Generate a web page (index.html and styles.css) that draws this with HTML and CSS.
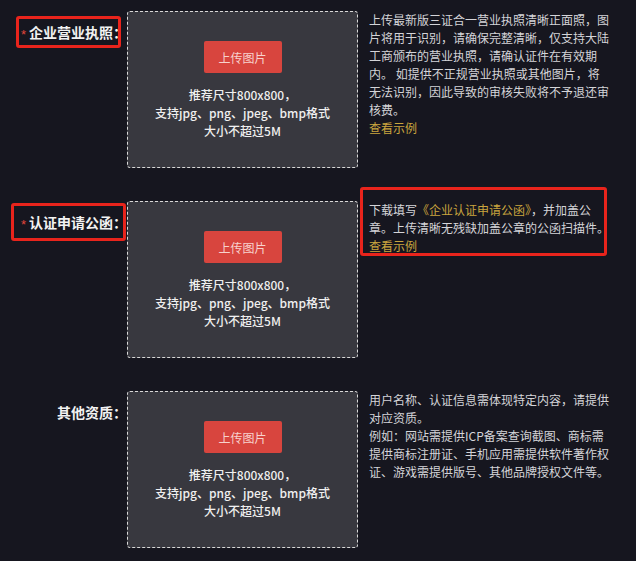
FILE: index.html
```html
<!DOCTYPE html>
<html lang="zh-CN">
<head>
<meta charset="utf-8">
<title>认证资料上传</title>
<link rel="stylesheet" href="styles.css">
</head>
<body>
<div class="form">
  <div class="row">
    <div class="label-col">
      <span class="label mark-1"><span class="req">*</span>企业营业执照：</span>
    </div>
    <div class="upload">
      <button class="btn" type="button">上传图片</button>
      <p class="hint">推荐尺寸800x800，<br>支持jpg、png、jpeg、bmp格式<br>大小不超过5M</p>
    </div>
    <div class="desc">
      上传最新版三证合一营业执照清晰正面照，图<br>片将用于识别，请确保完整清晰，仅支持大陆<br>工商颁布的营业执照，请确认证件在有效期<br>内。 如提供不正规营业执照或其他图片，将<br>无法识别，因此导致的审核失败将不予退还审<br>核费。<br><a class="link" href="#">查看示例</a>
    </div>
  </div>

  <div class="row">
    <div class="label-col">
      <span class="label mark-2"><span class="req">*</span>认证申请公函：</span>
    </div>
    <div class="upload">
      <button class="btn" type="button">上传图片</button>
      <p class="hint">推荐尺寸800x800，<br>支持jpg、png、jpeg、bmp格式<br>大小不超过5M</p>
    </div>
    <div class="desc mark-3">
      下载填写<a class="link" href="#">《企业认证申请公函》</a>，并加盖公<br>章。上传清晰无残缺加盖公章的公函扫描件。<br><a class="link" href="#">查看示例</a>
    </div>
  </div>

  <div class="row">
    <div class="label-col">
      <span class="label">其他资质：</span>
    </div>
    <div class="upload">
      <button class="btn" type="button">上传图片</button>
      <p class="hint">推荐尺寸800x800，<br>支持jpg、png、jpeg、bmp格式<br>大小不超过5M</p>
    </div>
    <div class="desc">
      用户名称、认证信息需体现特定内容，请提供<br>对应资质。<br>例如：网站需提供ICP备案查询截图、商标需<br>提供商标注册证、手机应用需提供软件著作权<br>证、游戏需提供版号、其他品牌授权文件等。
    </div>
  </div>
</div>
</body>
</html>
```
FILE: styles.css
```css
html, body {
  margin: 0;
  padding: 0;
  background: #16161f;
}
body {
  font-family: "Noto Sans CJK SC", "Noto Sans", sans-serif;
  color: #e6e6e6;
  width: 636px;
  height: 561px;
  overflow: hidden;
}
.form {
  display: flex;
  flex-direction: column;
  gap: 33px;
  padding-top: 11px;
}
.row {
  display: flex;
  align-items: flex-start;
  height: 157px;
}
.label-col {
  width: 127px;
  flex: none;
  display: flex;
  justify-content: flex-end;
  padding-top: 11px;
}
.label {
  position: relative;
  font-size: 14px;
  line-height: 20px;
  font-weight: 700;
  color: #f2f2f2;
  white-space: nowrap;
}
.req {
  display: inline-block;
  width: 8px;
  color: #e0453c;
  font-family: "Liberation Sans", sans-serif;
  font-size: 13px;
  font-weight: 400;
  vertical-align: -1px;
}
.mark-1::after,
.mark-2::after,
.mark-3::after {
  content: "";
  position: absolute;
  border: 3px solid #e8241c;
  border-radius: 3px;
  pointer-events: none;
}
.mark-1::after {
  top: -6px;
  bottom: -3px;
  left: -5px;
  right: 6px;
}
.mark-2::after {
  top: -9px;
  bottom: -6px;
  left: -10px;
  right: 1px;
}
.upload {
  flex: none;
  box-sizing: border-box;
  width: 231px;
  height: 157px;
  border: 1px dashed #d8d8d8;
  border-radius: 3px;
  background: #38383f;
  display: flex;
  flex-direction: column;
  align-items: center;
  padding-top: 29px;
}
.btn {
  width: 78px;
  height: 32px;
  border: none;
  border-radius: 2px;
  background: #d8453e;
  color: #f7d2cd;
  font-family: inherit;
  font-size: 12px;
  padding: 0;
}
.hint {
  margin: 13px 0 0;
  font-size: 12px;
  line-height: 18px;
  font-weight: 500;
  text-align: center;
  color: #f0f0f0;
}
.desc {
  position: relative;
  margin-left: 11px;
  width: 250px;
  font-size: 12px;
  line-height: 18px;
  color: #d4d4d8;
  white-space: nowrap;
}
.mark-3::after {
  top: -14px;
  bottom: -1px;
  left: -9px;
  right: 12px;
}
.link {
  color: #c9a53e;
  text-decoration: none;
}
```
